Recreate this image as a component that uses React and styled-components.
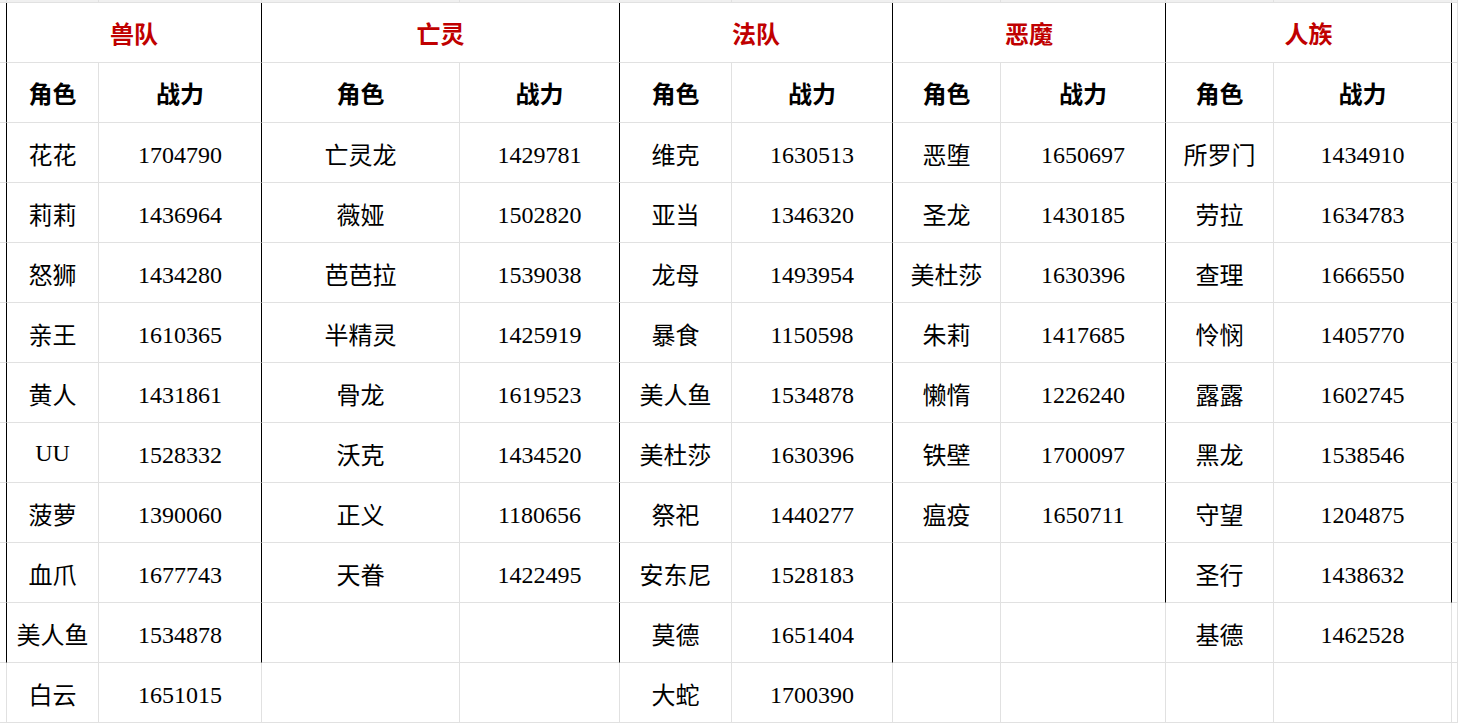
import React from 'react';
import styled, { createGlobalStyle } from 'styled-components';

const GlobalStyle = createGlobalStyle`
  html, body {
    margin: 0;
    padding: 0;
    background: #fff;
  }
  body {
    overflow: hidden;
  }
`;

const groups = [
  {
    name: '兽队',
    boxed: 11,
    rows: [
      ['花花', '1704790'], ['莉莉', '1436964'], ['怒狮', '1434280'], ['亲王', '1610365'],
      ['黄人', '1431861'], ['UU', '1528332'], ['菠萝', '1390060'], ['血爪', '1677743'],
      ['美人鱼', '1534878'], ['白云', '1651015'],
    ],
  },
  {
    name: '亡灵',
    boxed: 11,
    rows: [
      ['亡灵龙', '1429781'], ['薇娅', '1502820'], ['芭芭拉', '1539038'], ['半精灵', '1425919'],
      ['骨龙', '1619523'], ['沃克', '1434520'], ['正义', '1180656'], ['天眷', '1422495'],
    ],
  },
  {
    name: '法队',
    boxed: 11,
    rows: [
      ['维克', '1630513'], ['亚当', '1346320'], ['龙母', '1493954'], ['暴食', '1150598'],
      ['美人鱼', '1534878'], ['美杜莎', '1630396'], ['祭祀', '1440277'], ['安东尼', '1528183'],
      ['莫德', '1651404'], ['大蛇', '1700390'],
    ],
  },
  {
    name: '恶魔',
    boxed: 10,
    rows: [
      ['恶堕', '1650697'], ['圣龙', '1430185'], ['美杜莎', '1630396'], ['朱莉', '1417685'],
      ['懒惰', '1226240'], ['铁壁', '1700097'], ['瘟疫', '1650711'],
    ],
  },
  {
    name: '人族',
    boxed: 10,
    rows: [
      ['所罗门', '1434910'], ['劳拉', '1634783'], ['查理', '1666550'], ['怜悯', '1405770'],
      ['露露', '1602745'], ['黑龙', '1538546'], ['守望', '1204875'], ['圣行', '1438632'],
      ['基德', '1462528'],
    ],
  },
];

const DATA_ROWS = 10;

const Sheet = styled.div`
  display: grid;
  grid-template-columns: 7px 92px 163px 198px 160px 112px 161px 108px 165px 108px 178px 1fr;
  grid-template-rows: 3px repeat(12, 60px);
  width: 1458px;
  height: 723px;
  overflow: hidden;
  font-family: "Liberation Serif", "Noto Sans CJK SC", serif;
  font-size: 24px;
  color: #000;
`;

const Cell = styled.div`
  box-sizing: border-box;
  grid-column: span ${p => p.$span || 1};
  border-right: 1px solid ${p => (p.$edge ? '#000' : '#e1e1e1')};
  border-bottom: 1px solid #e1e1e1;
  display: flex;
  align-items: center;
  justify-content: center;
  padding-top: 2px;
  white-space: nowrap;
  overflow: hidden;
`;

const NumCell = styled(Cell)`
  padding-top: 5px;
`;

const StripCell = styled(Cell)`
  background: #f0f0f0;
  border-right-color: #e1e1e1;
  padding: 0;
`;

const TitleCell = styled(Cell)`
  color: #c00000;
  font-weight: 700;
  padding-top: 0;
`;

const HeadCell = styled(Cell)`
  font-weight: 700;
  padding-top: 0;
`;

// black line right of a group's last column: stays as long as either neighbouring group is boxed
const edgeAfter = (g, r) => {
  const left = groups[g] ? groups[g].boxed : 0;
  const right = groups[g + 1] ? groups[g + 1].boxed : 0;
  return r < Math.max(left, right);
};

const App = () => {
  const cells = [];

  // cut-off row at the very top
  for (let c = 0; c < 12; c++) cells.push(<StripCell key={`s${c}`} />);

  // titles
  cells.push(<Cell key="t-l" $edge={edgeAfter(-1, 0)} />);
  groups.forEach((grp, g) => {
    cells.push(
      <TitleCell key={`t${g}`} $span={2} $edge={edgeAfter(g, 0)}>
        {grp.name}
      </TitleCell>
    );
  });
  cells.push(<Cell key="t-r" />);

  // sub headers
  cells.push(<Cell key="h-l" $edge={edgeAfter(-1, 1)} />);
  groups.forEach((grp, g) => {
    cells.push(<HeadCell key={`h${g}a`}>角色</HeadCell>);
    cells.push(<HeadCell key={`h${g}b`} $edge={edgeAfter(g, 1)}>战力</HeadCell>);
  });
  cells.push(<Cell key="h-r" />);

  // data
  for (let i = 0; i < DATA_ROWS; i++) {
    const r = i + 2;
    cells.push(<Cell key={`d${i}-l`} $edge={edgeAfter(-1, r)} />);
    groups.forEach((grp, g) => {
      const row = grp.rows[i] || ['', ''];
      cells.push(<Cell key={`d${i}-${g}a`}>{row[0]}</Cell>);
      cells.push(<NumCell key={`d${i}-${g}b`} $edge={edgeAfter(g, r)}>{row[1]}</NumCell>);
    });
    cells.push(<Cell key={`d${i}-r`} />);
  }

  return (
    <>
      <GlobalStyle />
      <Sheet>{cells}</Sheet>
    </>
  );
};

export default App;
